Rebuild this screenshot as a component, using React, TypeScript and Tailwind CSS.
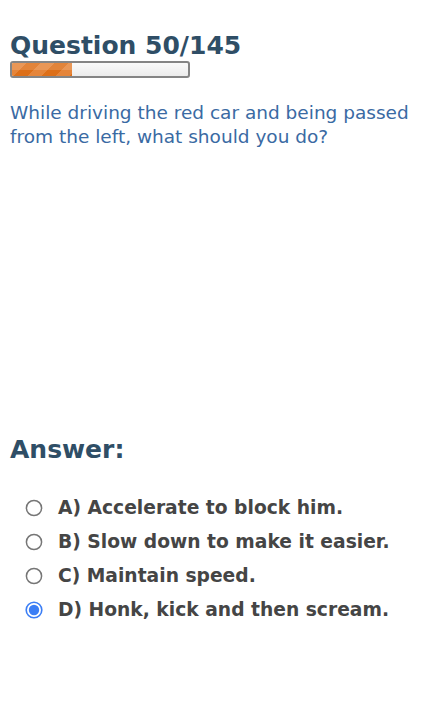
import React from "react";

const options = [
  { label: "A) Accelerate to block him.", checked: false },
  { label: "B) Slow down to make it easier.", checked: false },
  { label: "C) Maintain speed.", checked: false },
  { label: "D) Honk, kick and then scream.", checked: true },
];

function Radio({ checked }: { checked: boolean }) {
  return (
    <svg width="18" height="18" viewBox="0 0 18 18">
      {checked ? (
        <>
          <circle cx="9" cy="9" r="7.8" fill="#fff" stroke="#3b7ef5" strokeWidth="1.6" />
          <circle cx="9" cy="9" r="5.2" fill="#3b7ef5" />
        </>
      ) : (
        <circle cx="9" cy="9" r="7.6" fill="#fff" stroke="#767676" strokeWidth="1.5" />
      )}
    </svg>
  );
}

export default function App() {
  return (
    <div className="w-[423px] h-[718px] bg-white overflow-hidden font-['DejaVu_Sans',sans-serif]">
      <div className="px-[10px] pt-[32px]">
        <h1 className="text-[25px] leading-[28px] font-bold text-[#2f4e66]">Question 50/145</h1>
        <div className="mt-[1px] w-[180px] h-[17px] rounded-[3px] border-2 border-[#858585] bg-[linear-gradient(#fafafa,#ececec)] overflow-hidden">
          <div className="relative h-full w-[60px] bg-[linear-gradient(135deg,#e5853a_0%,#e5853a_25%,#dd6f18_25%,#dd6f18_50%,#e5853a_50%,#e5853a_75%,#dd6f18_75%)] bg-[length:28px_28px]">
            <div className="absolute inset-x-0 top-0 h-1/2 bg-white/15" />
          </div>
        </div>
        <p className="mt-[23px] text-[18.5px] leading-[24px] text-[#3a6aa3]">
          While driving the red car and being passed from the left, what should you do?
        </p>
        <h2 className="mt-[285px] text-[25px] leading-[32px] font-bold text-[#2f4e66]">Answer:</h2>
        <ul className="mt-[25px] flex flex-col">
          {options.map((o) => (
            <li key={o.label} className="flex items-center h-[34px] pl-[15px]">
              <Radio checked={o.checked} />
              <span className="ml-[15px] text-[18.7px] font-bold text-[#454545]">{o.label}</span>
            </li>
          ))}
        </ul>
      </div>
    </div>
  );
}
